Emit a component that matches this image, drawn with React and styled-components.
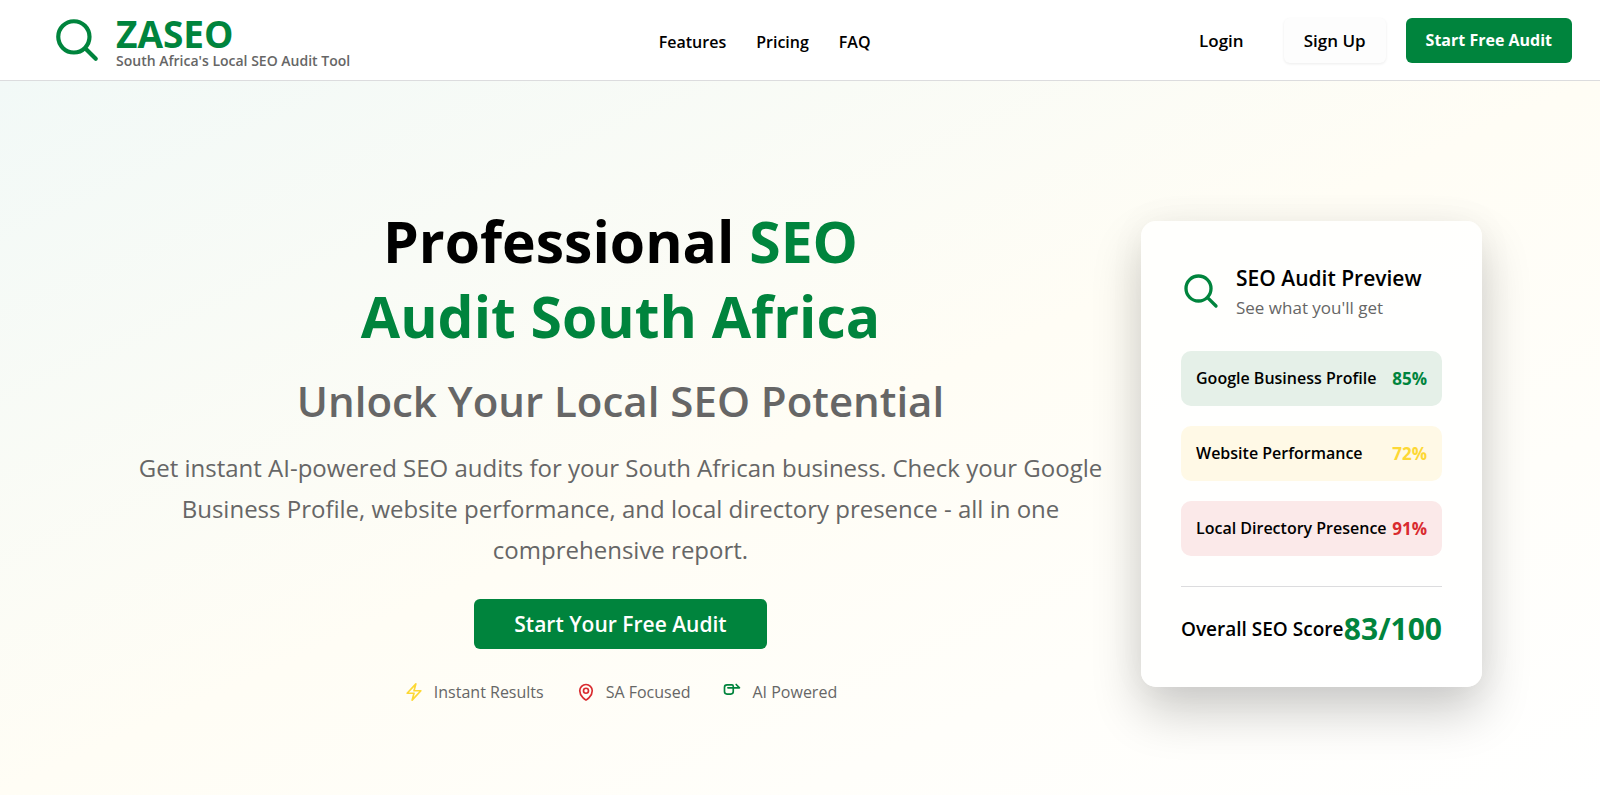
import React from "react";
import styled, { createGlobalStyle } from "styled-components";

const GlobalStyle = createGlobalStyle`
  * {
    box-sizing: border-box;
  }

  body {
    margin: 0;
    font-family: "Open Sans", "Noto Sans", sans-serif;
    color: #000;
    background: #fff;
  }

  h1, h2, h3, p, ul {
    margin: 0;
    padding: 0;
  }

  a {
    color: inherit;
    text-decoration: none;
  }
`;

const Page = styled.div`
  display: flex;
  flex-direction: column;
  min-height: 100vh;
`;

const Header = styled.header`
  display: flex;
  justify-content: space-between;
  align-items: center;
  height: 81px;
  padding: 0 28px 0 52px;
  background: #fff;
  border-bottom: 1px solid #dcdcde;
`;

const Brand = styled.a`
  display: flex;
  align-items: center;
  gap: 14px;
`;

const BrandText = styled.div`
  display: flex;
  flex-direction: column;
  padding-top: 4px;
`;

const BrandName = styled.span`
  font-size: 37px;
  line-height: 38px;
  font-weight: 700;
  color: #00843d;
`;

const Tagline = styled.span`
  font-size: 14px;
  line-height: 16px;
  font-weight: 600;
  color: #666;
`;

const Nav = styled.nav`
  display: flex;
  gap: 30px;
  padding-top: 4px;
`;

const NavLink = styled.a`
  font-size: 16px;
  line-height: 24px;
  font-weight: 600;
`;

const Actions = styled.div`
  display: flex;
  justify-content: flex-end;
  gap: 20px;
`;

const Button = styled.button`
  height: 45px;
  padding: 0 20px;
  border: 0;
  border-radius: 6px;
  font-family: inherit;
  font-size: ${({ $variant }) => ($variant === "primary" ? "16px" : "17px")};
  font-weight: ${({ $variant }) => ($variant === "primary" ? 700 : 600)};
  white-space: nowrap;
  cursor: pointer;
  color: ${({ $variant }) => ($variant === "primary" ? "#fff" : "#000")};
  background: ${({ $variant }) =>
    $variant === "primary" ? "#00843d" : $variant === "soft" ? "#fdfdfd" : "transparent"};
  box-shadow: ${({ $variant }) => ($variant === "soft" ? "0 1px 3px rgba(0, 0, 0, 0.08)" : "none")};
`;

const Hero = styled.main`
  flex: 1;
  display: flex;
  justify-content: center;
  align-items: flex-start;
  padding: 123px 118px 92px;
  background: linear-gradient(to bottom right, #f2f9f7 0%, #fffdf5 50%, #fff 100%);
`;

const HeroInner = styled.div`
  display: grid;
  grid-template-columns: minmax(0, 1fr) 341px;
  align-items: center;
  gap: 18px;
  width: 100%;
  max-width: 1364px;
`;

const Copy = styled.section`
  display: flex;
  flex-direction: column;
  align-items: center;
  text-align: center;
`;

const Title = styled.h1`
  max-width: 620px;
  font-size: 57px;
  line-height: 75px;
  font-weight: 700;

  span {
    color: #00843d;
  }
`;

const Subtitle = styled.h2`
  margin-top: 20px;
  font-size: 42px;
  line-height: 54px;
  font-weight: 600;
  color: #666;
`;

const Lead = styled.p`
  max-width: 980px;
  margin-top: 19px;
  font-size: 24px;
  line-height: 41px;
  color: #666;
`;

const HeroButton = styled(Button)`
  height: 50px;
  margin-top: 29px;
  padding: 0 40px;
  font-size: 21px;
  font-weight: 600;
`;

const Features = styled.ul`
  display: flex;
  gap: 32px;
  margin-top: 32px;
  list-style: none;
`;

const Feature = styled.li`
  display: flex;
  align-items: center;
  gap: 10px;
  font-size: 16px;
  line-height: 22px;
  color: #666;
`;

const Card = styled.aside`
  padding: 40px;
  border-radius: 15px;
  background: rgba(255, 255, 255, 0.8);
  box-shadow: 0 25px 50px rgba(0, 0, 0, 0.2), 0 0 40px rgba(0, 0, 0, 0.04);
`;

const CardHeader = styled.div`
  display: flex;
  align-items: center;
  gap: 15px;
`;

const CardTitle = styled.h3`
  font-size: 21px;
  line-height: 34px;
  font-weight: 600;
`;

const CardNote = styled.p`
  font-size: 17px;
  line-height: 26px;
  color: #666;
`;

const Scores = styled.div`
  display: flex;
  flex-direction: column;
  gap: 20px;
  margin: 30px 0;
`;

const ScoreRow = styled.div`
  display: flex;
  justify-content: space-between;
  align-items: center;
  height: 55px;
  padding: 0 15px;
  border-radius: 10px;
  font-size: 16px;
  font-weight: 600;
  white-space: nowrap;
  background: ${({ $bg }) => $bg};

  strong {
    font-size: 17px;
    font-weight: 700;
    color: ${({ $color }) => $color};
  }
`;

const Total = styled.div`
  display: flex;
  justify-content: space-between;
  align-items: center;
  padding-top: 24px;
  border-top: 1px solid #dcdcde;
  font-size: 19px;
  line-height: 36px;
  font-weight: 600;
  white-space: nowrap;

  strong {
    font-size: 30px;
    font-weight: 700;
    color: #00843d;
  }
`;

const Icon = styled.svg`
  flex: none;
  width: ${({ $size }) => $size}px;
  height: ${({ $size }) => $size}px;
  fill: none;
  stroke: ${({ $color }) => $color};
  stroke-width: 2;
  stroke-linecap: round;
  stroke-linejoin: round;
`;

const scores = [
  { label: "Google Business Profile", value: "85%", color: "#00843d", bg: "#e5f0e8" },
  { label: "Website Performance", value: "72%", color: "#fdd835", bg: "#fff9e6" },
  { label: "Local Directory Presence", value: "91%", color: "#d92b2f", bg: "#fbe9e9" },
];

const SearchIcon = ({ size }) => (
  <Icon viewBox="0 0 24 24" $size={size} $color="#00843d" aria-hidden="true">
    <path d="m21 21-5.197-5.197m0 0A7.5 7.5 0 1 0 5.196 5.196a7.5 7.5 0 0 0 10.607 10.607Z" />
  </Icon>
);

const BoltIcon = () => (
  <Icon viewBox="0 0 24 24" $size={20} $color="#fdd835" aria-hidden="true">
    <path d="m3.75 13.5 10.5-11.25L12 10.5h8.25L9.75 21.75 12 13.5H3.75Z" />
  </Icon>
);

const PinIcon = () => (
  <Icon viewBox="0 0 24 24" $size={20} $color="#d92b2f" aria-hidden="true">
    <path d="M15 10.5a3 3 0 1 1-6 0 3 3 0 0 1 6 0Z" />
    <path d="M19.5 10.5c0 7.142-7.5 11.25-7.5 11.25S4.5 17.642 4.5 10.5a7.5 7.5 0 1 1 15 0Z" />
  </Icon>
);

const AiIcon = () => (
  <Icon viewBox="0 0 24 24" $size={20} $color="#00843d" aria-hidden="true">
    <path d="M12 3.500H6A3 3 0 0 0 3 6.500v5A3 3 0 0 0 6 14.500h4.500a3 3 0 0 0 3-3V5a1.500 1.500 0 0 0-1.500-1.500Z" />
    <path d="M7 7h14l-4-4" />
  </Icon>
);

const App = () => {
  return (
    <Page>
      <GlobalStyle />
      <Header>
        <Brand href="#">
          <SearchIcon size={50} />
          <BrandText>
            <BrandName>ZASEO</BrandName>
            <Tagline>South Africa's Local SEO Audit Tool</Tagline>
          </BrandText>
        </Brand>
        <Nav>
          <NavLink href="#features">Features</NavLink>
          <NavLink href="#pricing">Pricing</NavLink>
          <NavLink href="#faq">FAQ</NavLink>
        </Nav>
        <Actions>
          <Button>Login</Button>
          <Button $variant="soft">Sign Up</Button>
          <Button $variant="primary">Start Free Audit</Button>
        </Actions>
      </Header>

      <Hero>
        <HeroInner>
          <Copy>
            <Title>
              Professional <span>SEO Audit South Africa</span>
            </Title>
            <Subtitle>Unlock Your Local SEO Potential</Subtitle>
            <Lead>
              Get instant AI-powered SEO audits for your South African business. Check your Google
              Business Profile, website performance, and local directory presence - all in one
              comprehensive report.
            </Lead>
            <HeroButton $variant="primary">Start Your Free Audit</HeroButton>
            <Features>
              <Feature>
                <BoltIcon />
                Instant Results
              </Feature>
              <Feature>
                <PinIcon />
                SA Focused
              </Feature>
              <Feature>
                <AiIcon />
                AI Powered
              </Feature>
            </Features>
          </Copy>

          <Card>
            <CardHeader>
              <SearchIcon size={40} />
              <div>
                <CardTitle>SEO Audit Preview</CardTitle>
                <CardNote>See what you'll get</CardNote>
              </div>
            </CardHeader>
            <Scores>
              {scores.map((item) => (
                <ScoreRow key={item.label} $bg={item.bg} $color={item.color}>
                  <span>{item.label}</span>
                  <strong>{item.value}</strong>
                </ScoreRow>
              ))}
            </Scores>
            <Total>
              <span>Overall SEO Score</span>
              <strong>83/100</strong>
            </Total>
          </Card>
        </HeroInner>
      </Hero>
    </Page>
  );
};

export default App;
